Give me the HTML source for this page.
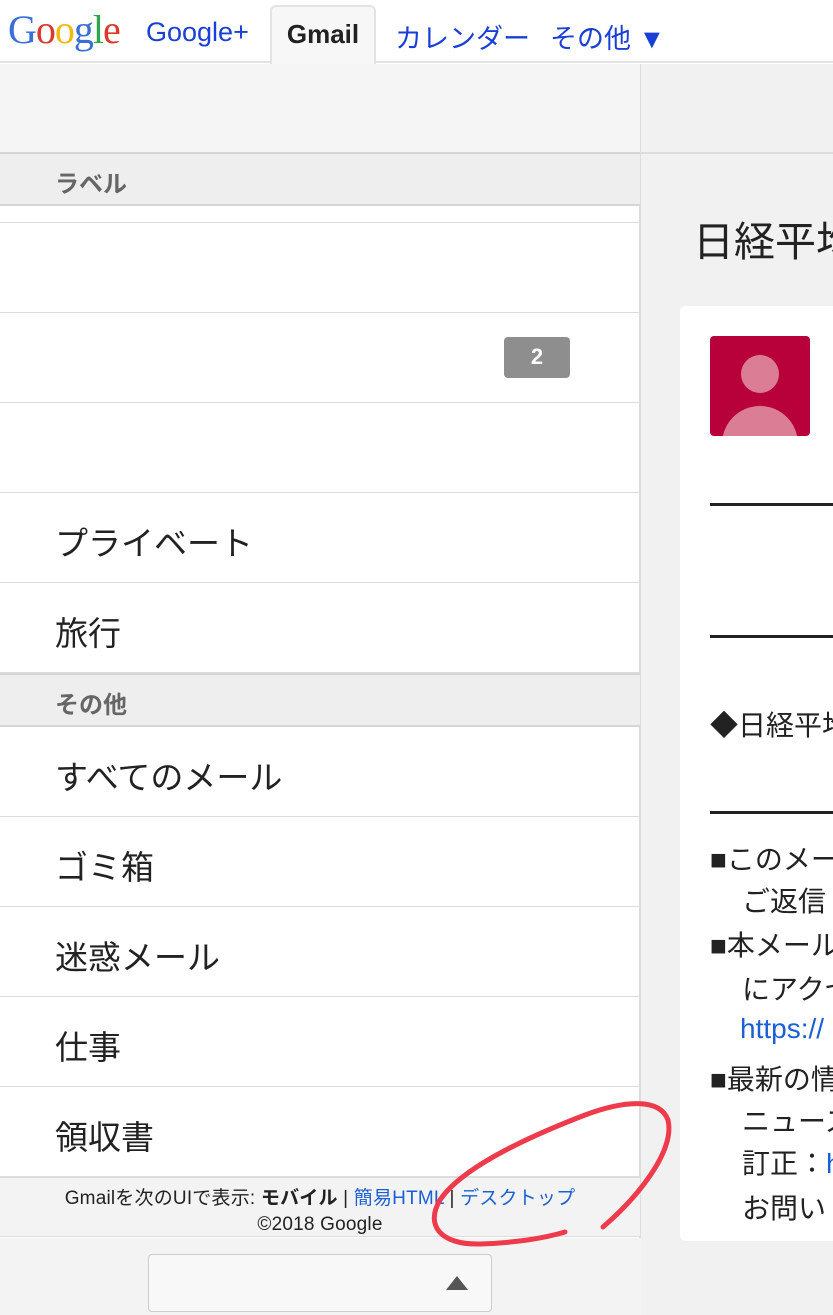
<!DOCTYPE html>
<html><head><meta charset="utf-8"><style>
*{margin:0;padding:0;box-sizing:border-box}
body{width:833px;height:1315px;overflow:hidden;background:#fff;font-family:"Liberation Sans","Noto Sans CJK JP",sans-serif;position:relative}
.a{position:absolute}
.top{left:0;top:0;width:833px;height:63px;background:#fff;border-bottom:2px solid #e3e3e3}
.nav{font-size:27px;color:#1a3fd6;top:17px}
.tab{left:270px;top:5px;width:106px;height:60px;background:#f7f7f7;border:2px solid #e3e3e3;border-bottom:none;border-radius:6px 6px 0 0;font-weight:bold;font-size:26px;color:#222;text-align:center;padding-top:12px}
.left{left:0;top:64px;width:641px;height:1174px;border-right:2px solid #ddd}
.hdr{left:0;width:640px;height:54px;background:#eeeeee;border-top:2px solid #d6d6d6;border-bottom:2px solid #d6d6d6;color:#666;font-weight:bold;font-size:24px;padding:10px 0 0 55px}
.row{left:0;width:640px;height:90px;border-bottom:1px solid #ddd;font-size:33px;color:#222;padding:24px 0 0 55px}
.rt{font-size:28px;color:#222;white-space:nowrap;left:69px}
#rp{left:641px;top:64px;width:192px;height:1251px;background:#f1f1f1;overflow:hidden}
</style></head><body>
<div class="a top"></div>
<div class="a" style="left:8px;top:6px;font-size:40px;font-family:'Liberation Serif',serif;letter-spacing:-1px"><span style="color:#3a6fd8">G</span><span style="color:#d93a2b">o</span><span style="color:#f2b90f">o</span><span style="color:#3a6fd8">g</span><span style="color:#2aa84a">l</span><span style="color:#d93a2b">e</span></div>
<div class="a nav" style="left:146px">Google+</div>
<div class="a tab">Gmail</div>
<div class="a nav" style="left:395px">カレンダー</div>
<div class="a nav" style="left:550px">その他 ▼</div>

<div class="a" id="rp">
<div class="a" style="left:0;top:88px;width:192px;height:2px;background:#ddd"></div>
<div class="a" style="left:52px;top:144px;font-size:41px;color:#222;white-space:nowrap">日経平均</div>
<div class="a" style="left:39px;top:242px;width:160px;height:935px;background:#fff;border-radius:6px"></div>
<div class="a" style="left:69px;top:272px;width:100px;height:100px;background:#b8003a;border-radius:4px;overflow:hidden">
<div class="a" style="left:31px;top:19px;width:38px;height:38px;border-radius:50%;background:#dc7d96"></div>
<div class="a" style="left:12px;top:70px;width:76px;height:40px;border-radius:38px 38px 0 0;background:#dc7d96"></div></div>
<div class="a" style="left:69px;top:439px;width:123px;height:3px;background:#222"></div>
<div class="a" style="left:69px;top:571px;width:123px;height:3px;background:#222"></div>
<div class="a" style="left:69px;top:747px;width:123px;height:3px;background:#222"></div>
<div class="a rt" style="top:640px">◆日経平均</div>
<div class="a rt" style="top:774px">■このメー</div>
<div class="a rt" style="top:816px;left:101px">ご返信</div>
<div class="a rt" style="top:860px">■本メール</div>
<div class="a rt" style="top:904px;left:101px">にアクセス</div>
<div class="a rt" style="top:949px;left:99px;color:#1a5fd6">https://</div>
<div class="a rt" style="top:994px">■最新の情</div>
<div class="a rt" style="top:1036px;left:101px">ニュース</div>
<div class="a rt" style="top:1078px;left:101px">訂正：<span style="color:#1a5fd6">h</span></div>
<div class="a rt" style="top:1123px;left:101px">お問い</div>
</div>

<div class="a left"></div>
<div class="a" style="left:0;top:64px;width:640px;height:88px;background:#f5f5f5"></div>
<div class="a hdr" style="top:152px">ラベル</div>
<div class="a" style="left:0;top:206px;width:640px;height:17px;border-bottom:1px solid #ddd"></div>
<div class="a row" style="top:223px"></div>
<div class="a row" style="top:313px"></div>
<div class="a" style="left:504px;top:337px;width:66px;height:41px;background:#8e8e8e;border-radius:4px;color:#fff;font-weight:bold;font-size:22px;text-align:center;padding-top:7px">2</div>
<div class="a row" style="top:403px"></div>
<div class="a row" style="top:493px">プライベート</div>
<div class="a row" style="top:583px">旅行</div>
<div class="a hdr" style="top:673px">その他</div>
<div class="a row" style="top:727px">すべてのメール</div>
<div class="a row" style="top:817px">ゴミ箱</div>
<div class="a row" style="top:907px">迷惑メール</div>
<div class="a row" style="top:997px">仕事</div>
<div class="a row" style="top:1087px">領収書</div>
<div class="a" style="left:0;top:1177px;width:640px;height:60px;background:#f3f3f3;border-top:1px solid #ddd;border-bottom:1px solid #ddd;text-align:center;font-size:19px;color:#222;line-height:26px;padding-top:8px;letter-spacing:0.2px">Gmailを次のUIで表示: <b>モバイル</b> | <span style="color:#1a5fd6">簡易HTML</span> | <span style="color:#1a5fd6">デスクトップ</span><br>©2018 Google</div>
<div class="a" style="left:0;top:1238px;width:641px;height:77px;background:#f3f3f3"></div>
<div class="a" style="left:148px;top:1254px;width:344px;height:58px;background:#f8f8f8;border:1px solid #ccc;border-radius:4px"></div>
<div class="a" style="left:446px;top:1276px;width:0;height:0;border-left:11px solid transparent;border-right:11px solid transparent;border-bottom:14px solid #555"></div>
<svg class="a" style="left:0;top:0" width="833" height="1315"><path d="M603 1227 C640 1195 675 1150 668 1120 C660 1098 625 1100 585 1115 C520 1140 460 1170 440 1200 C425 1225 440 1245 480 1244 C515 1243 545 1238 565 1232" fill="none" stroke="#ee3b4c" stroke-width="5" stroke-linecap="round"/></svg>
</body></html>
